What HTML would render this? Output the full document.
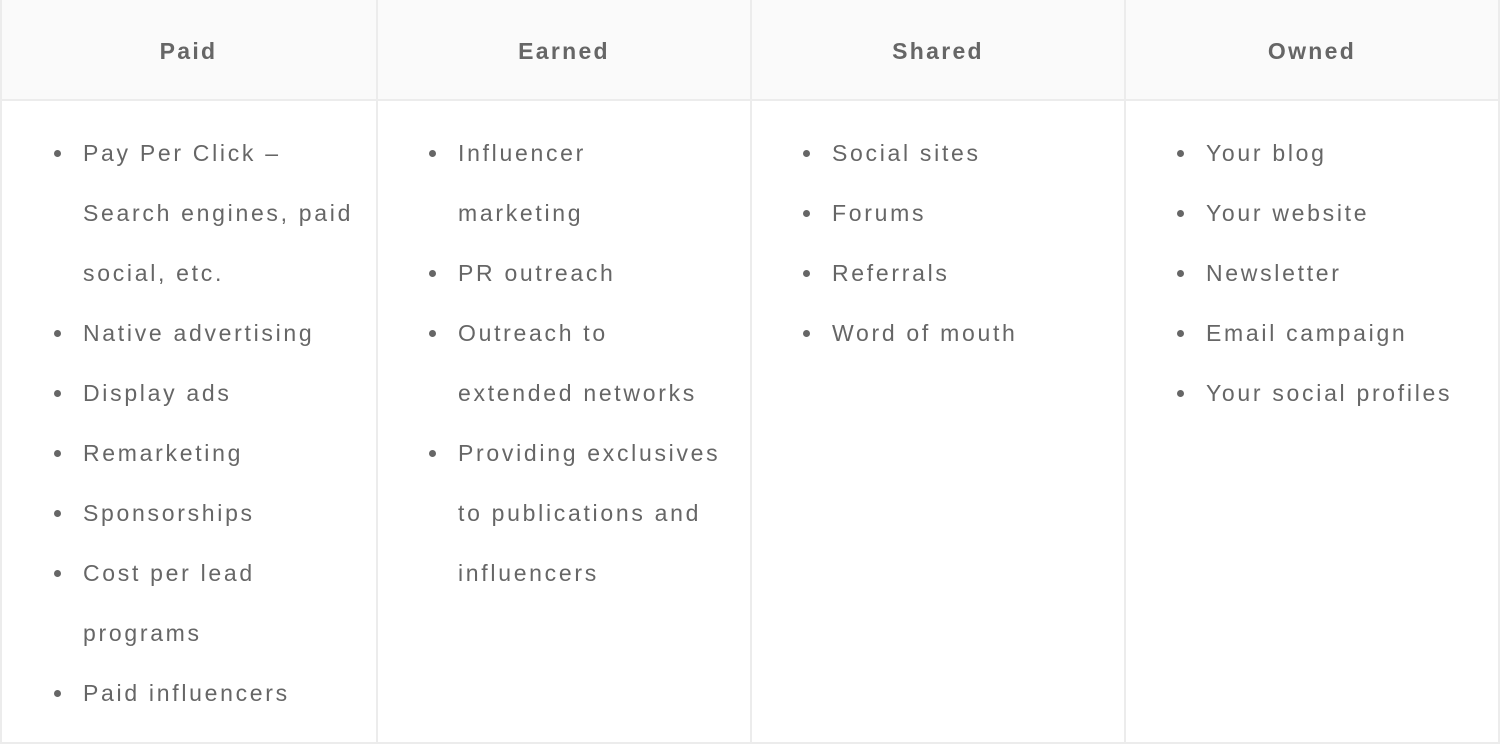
<!DOCTYPE html>
<html><head><meta charset="utf-8"><style>
body{margin:0;width:1500px;height:744px;background:#fff;font-family:"Liberation Sans",sans-serif;color:#666;overflow:hidden;position:relative}
.box{position:absolute;left:0;top:0;width:1500px;height:744px;box-sizing:border-box;border:2px solid #ececec;border-top:0;z-index:5}
.hd{position:absolute;left:0;top:0;width:1500px;height:99px;background:#fafafa;border-bottom:2px solid #ececec}
.v{position:absolute;top:0;width:2px;height:744px;background:#ececec}
.h{position:absolute;top:0;height:99px;line-height:102px;text-align:center;font-weight:bold;font-size:23px;letter-spacing:2.3px;color:#666}
ul{position:absolute;top:123px;margin:0;padding:0;list-style:none;font-size:23px;letter-spacing:2.7px;line-height:60px;white-space:nowrap}
li{position:relative}
li:before{content:"";position:absolute;left:-29px;top:27px;width:7px;height:7px;border-radius:50%;background:#666}
</style></head><body>
<div class="box"></div>
<div class="hd"></div>
<div class="v" style="left:376px"></div>
<div class="v" style="left:750px"></div>
<div class="v" style="left:1124px"></div>
<div class="h" style="left:0;width:377px">Paid</div>
<div class="h" style="left:377px;width:374px">Earned</div>
<div class="h" style="left:751px;width:374px">Shared</div>
<div class="h" style="left:1125px;width:374px">Owned</div>
<ul style="left:83px">
<li>Pay Per Click –<br>Search engines, paid<br>social, etc.</li>
<li>Native advertising</li><li>Display ads</li><li>Remarketing</li><li>Sponsorships</li><li>Cost per lead<br>programs</li><li>Paid influencers</li></ul>
<ul style="left:458px">
<li>Influencer<br>marketing</li><li>PR outreach</li><li>Outreach to<br>extended networks</li><li>Providing exclusives<br>to publications and<br>influencers</li></ul>
<ul style="left:832px">
<li>Social sites</li><li>Forums</li><li>Referrals</li><li>Word of mouth</li></ul>
<ul style="left:1206px">
<li>Your blog</li><li>Your website</li><li>Newsletter</li><li>Email campaign</li><li>Your social profiles</li></ul>
</body></html>
